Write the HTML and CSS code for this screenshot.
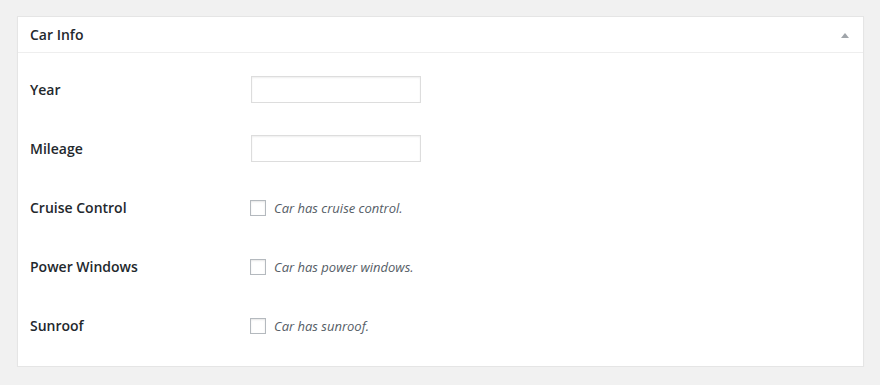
FILE: index.html
```html
<!DOCTYPE html>
<html>
<head>
<meta charset="utf-8">
<link rel="stylesheet" href="styles.css">
</head>
<body>
<div class="postbox">
  <div class="postbox-header">
    <h2 class="hndle">Car Info</h2>
    <svg class="toggle" width="8" height="5" viewBox="0 0 8 5"><path d="M4 0 L8 5 L0 5 Z" fill="#a0a5aa"/></svg>
  </div>
  <div class="inside">
    <div class="form-row">
      <div class="label">Year</div>
      <div class="field"><input type="text" class="text-input"></div>
    </div>
    <div class="form-row">
      <div class="label">Mileage</div>
      <div class="field"><input type="text" class="text-input"></div>
    </div>
    <div class="form-row">
      <div class="label">Cruise Control</div>
      <div class="field"><span class="checkbox"></span><span class="desc">Car has cruise control.</span></div>
    </div>
    <div class="form-row">
      <div class="label">Power Windows</div>
      <div class="field"><span class="checkbox"></span><span class="desc">Car has power windows.</span></div>
    </div>
    <div class="form-row">
      <div class="label">Sunroof</div>
      <div class="field"><span class="checkbox"></span><span class="desc">Car has sunroof.</span></div>
    </div>
  </div>
</div>
</body>
</html>
```
FILE: styles.css
```css
html, body {
  margin: 0;
  padding: 0;
  background: #f1f1f1;
  font-family: "Open Sans", "Noto Sans", sans-serif;
  color: #23282d;
}
body {
  padding: 16px 0 0 17px;
}
.postbox {
  width: 845px;
  background: #fff;
  border: 1px solid #e5e5e5;
  box-shadow: 0 1px 1px rgba(0, 0, 0, 0.04);
}
.postbox-header {
  height: 35px;
  border-bottom: 1px solid #eee;
  display: flex;
  align-items: center;
  justify-content: space-between;
  padding: 0 14px 0 12px;
}
.hndle {
  margin: 0;
  font-size: 14px;
  font-weight: 600;
  line-height: 1.4;
}
.toggle {
  display: block;
  margin-top: 1px;
}
.inside {
  padding: 7px 12px 11px;
}
.form-row {
  height: 59px;
  display: flex;
  align-items: center;
}
.label {
  width: 220px;
  padding-top: 2px;
  font-size: 14px;
  font-weight: 600;
  line-height: 1.3;
}
.field {
  display: flex;
  align-items: center;
}
.text-input {
  box-sizing: border-box;
  width: 170px;
  height: 27px;
  margin: 0 0 0 1px;
  padding: 3px 5px;
  border: 1px solid #ddd;
  box-shadow: inset 0 1px 2px rgba(0, 0, 0, 0.07);
  background: #fff;
  font-size: 14px;
  font-family: inherit;
  outline: none;
}
.checkbox {
  box-sizing: border-box;
  display: block;
  width: 16px;
  height: 16px;
  border: 1px solid #b4b9be;
  background: #fff;
  box-shadow: inset 0 1px 2px rgba(0, 0, 0, 0.1);
  margin-right: 8px;
}
.desc {
  font-size: 13px;
  font-style: italic;
  color: #555d66;
}
```
